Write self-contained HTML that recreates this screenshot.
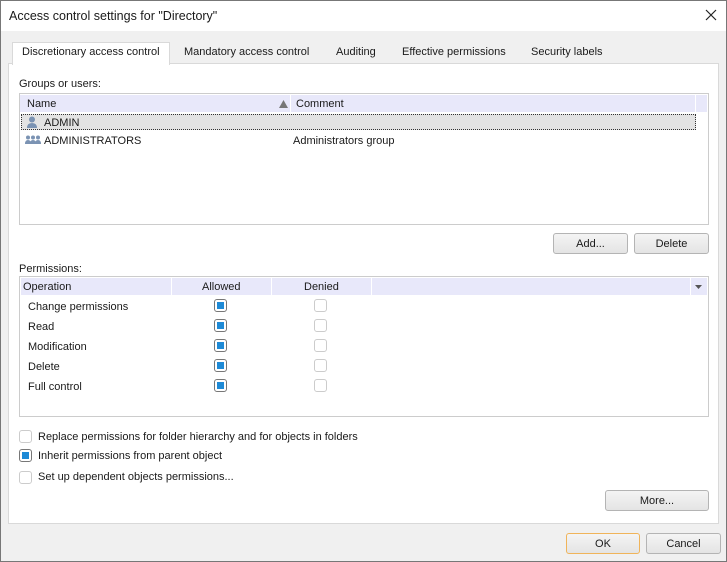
<!DOCTYPE html>
<html><head><style>
*{box-sizing:border-box;margin:0;padding:0}
body{width:727px;height:562px;position:relative;overflow:hidden;font-family:"Liberation Sans",sans-serif;font-size:11px;color:#1a1a1a;background:#f0f0f0}
.a{position:absolute;white-space:nowrap}
.t{margin-top:1px}
.btn{position:absolute;border:1px solid #b4b4b4;border-radius:3px;background:linear-gradient(#f4f4f4,#e4e4e4);text-align:center;line-height:20px}
.cb{position:absolute;width:13px;height:13px;border:1px solid #ccc;border-radius:3px;background:#fff}
.cb.on{border-color:#777}
.cb.on::after{content:"";position:absolute;left:2px;top:2px;width:7px;height:7px;background:#1e8ad6}
</style></head><body>
<div class="a" style="left:0;top:0;width:727px;height:562px;border:1px solid #777"></div>
<div class="a" style="left:1px;top:1px;width:725px;height:30px;background:#fff"></div>
<div class="a" style="left:9px;top:9px;font-size:12.5px">Access control settings for "Directory"</div>
<svg class="a" style="left:705px;top:9px" width="12" height="12"><path d="M1 1L11 11M11 1L1 11" stroke="#222" stroke-width="1.2"/></svg>
<div class="a" style="left:8px;top:63px;width:711px;height:461px;background:#fff;border:1px solid #d9d9d9"></div>
<div class="a" style="left:12px;top:42px;width:158px;height:23px;background:#fff;border:1px solid #d9d9d9;border-bottom:none"></div>
<div class="a" style="left:22px;top:46px">Discretionary access control</div>
<div class="a" style="left:184px;top:46px">Mandatory access control</div>
<div class="a" style="left:336px;top:46px">Auditing</div>
<div class="a" style="left:402px;top:46px">Effective permissions</div>
<div class="a" style="left:531px;top:46px">Security labels</div>
<div class="a" style="left:19px;top:78px">Groups or users:</div>
<div class="a" style="left:19px;top:93px;width:690px;height:132px;border:1px solid #ccc;background:#fff"></div>
<div class="a" style="left:20px;top:95px;width:270px;height:17px;background:#e8e8fa"></div>
<div class="a" style="left:291px;top:95px;width:404px;height:17px;background:#e8e8fa"></div>
<div class="a" style="left:696px;top:95px;width:11px;height:17px;background:#e8e8fa"></div>
<div class="a" style="left:27px;top:98px">Name</div>
<svg class="a" style="left:279px;top:100px" width="9" height="8"><path d="M4.5 0L9 8H0Z" fill="#777"/></svg>
<div class="a" style="left:296px;top:98px">Comment</div>
<div class="a" style="left:21px;top:114px;width:675px;height:16px;background:#e3e3e3;border:1px dotted #333"></div>
<svg class="a" style="left:26px;top:116px" width="12" height="12"><circle cx="6" cy="3.5" r="3" fill="#7b93b3"/><path d="M1 12Q1 7 6 7Q11 7 11 12Z" fill="#7b93b3"/></svg>
<div class="a" style="left:44px;top:117px">ADMIN</div>
<svg class="a" style="left:25px;top:135px" width="16" height="10"><g fill="#7b93b3"><circle cx="3" cy="2.5" r="2"/><circle cx="8" cy="2.5" r="2"/><circle cx="13" cy="2.5" r="2"/><path d="M0 9Q0 5 3 5Q6 5 6 9ZM5 9Q5 5 8 5Q11 5 11 9ZM10 9Q10 5 13 5Q16 5 16 9Z"/></g></svg>
<div class="a" style="left:44px;top:135px">ADMINISTRATORS</div>
<div class="a" style="left:293px;top:135px">Administrators group</div>
<div class="btn" style="left:553px;top:233px;width:75px;height:21px">Add...</div>
<div class="btn" style="left:634px;top:233px;width:75px;height:21px">Delete</div>
<div class="a" style="left:19px;top:263px">Permissions:</div>
<div class="a" style="left:19px;top:276px;width:690px;height:141px;border:1px solid #ccc;background:#fff"></div>
<div class="a" style="left:21px;top:278px;width:150px;height:17px;background:#e8e8fa"></div>
<div class="a" style="left:172px;top:278px;width:99px;height:17px;background:#e8e8fa"></div>
<div class="a" style="left:272px;top:278px;width:99px;height:17px;background:#e8e8fa"></div>
<div class="a" style="left:372px;top:278px;width:318px;height:17px;background:#e8e8fa"></div>
<div class="a" style="left:691px;top:278px;width:16px;height:17px;background:#e8e8fa"></div>
<svg class="a" style="left:695px;top:285px" width="7" height="4"><path d="M0 0H7L3.5 4Z" fill="#555"/></svg>
<div class="a" style="left:23px;top:281px">Operation</div>
<div class="a" style="left:202px;top:281px">Allowed</div>
<div class="a" style="left:304px;top:281px">Denied</div>
<div class="a" style="left:28px;top:301px">Change permissions</div>
<div class="a" style="left:28px;top:321px">Read</div>
<div class="a" style="left:28px;top:341px">Modification</div>
<div class="a" style="left:28px;top:361px">Delete</div>
<div class="a" style="left:28px;top:381px">Full control</div>
<div class="cb on" style="left:214px;top:299px"></div><div class="cb" style="left:314px;top:299px"></div>
<div class="cb on" style="left:214px;top:319px"></div><div class="cb" style="left:314px;top:319px"></div>
<div class="cb on" style="left:214px;top:339px"></div><div class="cb" style="left:314px;top:339px"></div>
<div class="cb on" style="left:214px;top:359px"></div><div class="cb" style="left:314px;top:359px"></div>
<div class="cb on" style="left:214px;top:379px"></div><div class="cb" style="left:314px;top:379px"></div>
<div class="cb" style="left:19px;top:430px"></div>
<div class="a" style="left:38px;top:431px">Replace permissions for folder hierarchy and for objects in folders</div>
<div class="cb on" style="left:19px;top:449px"></div>
<div class="a" style="left:38px;top:450px">Inherit permissions from parent object</div>
<div class="cb" style="left:19px;top:471px"></div>
<div class="a" style="left:38px;top:471px">Set up dependent objects permissions...</div>
<div class="btn" style="left:605px;top:490px;width:104px;height:21px">More...</div>
<div class="btn" style="left:566px;top:533px;width:74px;height:21px;border-color:#f0b45a">OK</div>
<div class="btn" style="left:646px;top:533px;width:75px;height:21px">Cancel</div>
</body></html>
